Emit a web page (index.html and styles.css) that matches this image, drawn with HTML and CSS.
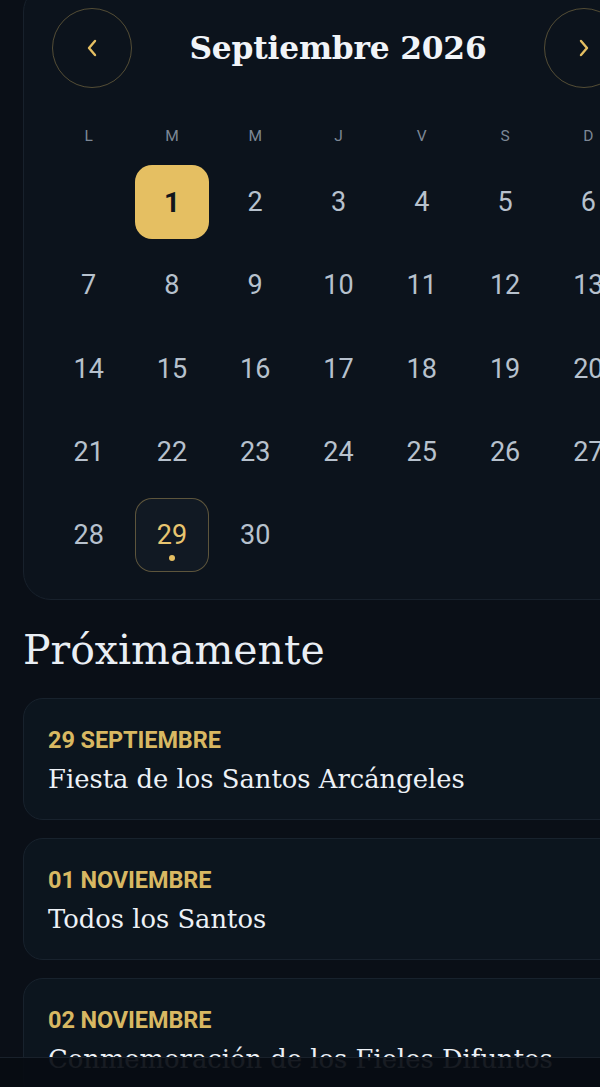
FILE: index.html
```html
<!DOCTYPE html>
<html lang="es">
<head>
<meta charset="utf-8">
<title>Calendario</title>
<link rel="stylesheet" href="styles.css">
</head>
<body>
<div class="page">
  <section class="calendar">
    <header class="cal-head">
      <button class="nav-btn" aria-label="Mes anterior">
        <svg width="16" height="20" viewBox="0 0 16 20"><path d="M11 3 L5 10 L11 17" fill="none" stroke="#e5bf62" stroke-width="2.4" stroke-linecap="round" stroke-linejoin="round"/></svg>
      </button>
      <h1 class="month">Septiembre 2026</h1>
      <button class="nav-btn" aria-label="Mes siguiente">
        <svg width="16" height="20" viewBox="0 0 16 20"><path d="M5 3 L11 10 L5 17" fill="none" stroke="#e5bf62" stroke-width="2.4" stroke-linecap="round" stroke-linejoin="round"/></svg>
      </button>
    </header>
    <div class="weekdays">
      <span>L</span><span>M</span><span>M</span><span>J</span><span>V</span><span>S</span><span>D</span>
    </div>
    <div class="days">
      <span class="day empty"></span>
      <span class="day"><span class="cell today">1</span></span>
      <span class="day"><span class="cell">2</span></span>
      <span class="day"><span class="cell">3</span></span>
      <span class="day"><span class="cell">4</span></span>
      <span class="day"><span class="cell">5</span></span>
      <span class="day"><span class="cell">6</span></span>
      <span class="day"><span class="cell">7</span></span>
      <span class="day"><span class="cell">8</span></span>
      <span class="day"><span class="cell">9</span></span>
      <span class="day"><span class="cell">10</span></span>
      <span class="day"><span class="cell">11</span></span>
      <span class="day"><span class="cell">12</span></span>
      <span class="day"><span class="cell">13</span></span>
      <span class="day"><span class="cell">14</span></span>
      <span class="day"><span class="cell">15</span></span>
      <span class="day"><span class="cell">16</span></span>
      <span class="day"><span class="cell">17</span></span>
      <span class="day"><span class="cell">18</span></span>
      <span class="day"><span class="cell">19</span></span>
      <span class="day"><span class="cell">20</span></span>
      <span class="day"><span class="cell">21</span></span>
      <span class="day"><span class="cell">22</span></span>
      <span class="day"><span class="cell">23</span></span>
      <span class="day"><span class="cell">24</span></span>
      <span class="day"><span class="cell">25</span></span>
      <span class="day"><span class="cell">26</span></span>
      <span class="day"><span class="cell">27</span></span>
      <span class="day"><span class="cell">28</span></span>
      <span class="day"><span class="cell event">29<i class="dot"></i></span></span>
      <span class="day"><span class="cell">30</span></span>
    </div>
  </section>

  <h2 class="section-title">Próximamente</h2>

  <ul class="events">
    <li class="event-card">
      <div class="event-date">29 SEPTIEMBRE</div>
      <div class="event-name">Fiesta de los Santos Arcángeles</div>
    </li>
    <li class="event-card">
      <div class="event-date">01 NOVIEMBRE</div>
      <div class="event-name">Todos los Santos</div>
    </li>
    <li class="event-card">
      <div class="event-date">02 NOVIEMBRE</div>
      <div class="event-name">Conmemoración de los Fieles Difuntos</div>
    </li>
  </ul>
</div>
<nav class="bottom-bar"></nav>
</body>
</html>
```

FILE: styles.css
```css
* { box-sizing: border-box; }

html, body {
  margin: 0;
  padding: 0;
  background: #0a0f17;
  overflow: hidden;
  height: 1087px;
}

body {
  font-family: Roboto, "Noto Sans", sans-serif;
  color: #e8eef5;
}

.page {
  width: 677px;
  padding: 0 23px;
}

.calendar {
  margin-top: -16px;
  width: 631px;
  background: #0c131c;
  border: 1px solid #18212c;
  border-radius: 28px;
  padding: 23px 23px 22px;
}

.cal-head {
  display: flex;
  align-items: center;
  justify-content: space-between;
  padding: 0 6px 0 5px;
  height: 80px;
}

.nav-btn {
  width: 80px;
  height: 80px;
  border-radius: 50%;
  background: transparent;
  border: 1.5px solid rgba(200, 170, 95, 0.38);
  display: flex;
  align-items: center;
  justify-content: center;
  padding: 0;
}

.month {
  margin: 0;
  font-family: "DejaVu Serif", "Liberation Serif", serif;
  font-weight: 700;
  font-size: 31.3px;
  color: #f1f4f8;
  letter-spacing: -0.2px;
}

.weekdays {
  display: grid;
  grid-template-columns: repeat(7, 1fr);
  margin-top: 28px;
  height: 40px;
  align-items: center;
  text-align: center;
  font-size: 15.5px;
  color: #7c8795;
}

.days {
  display: grid;
  grid-template-columns: repeat(7, 1fr);
  grid-auto-rows: 83.33px;
  margin-top: 4px;
}

.day {
  display: flex;
  align-items: center;
  justify-content: center;
}

.cell {
  position: relative;
  width: 74px;
  height: 74px;
  display: flex;
  align-items: center;
  justify-content: center;
  font-size: 27px;
  color: #b7c1cd;
  border-radius: 17px;
  padding-top: 1px;
}

.cell.today {
  background: #e5bf62;
  color: #12161c;
  font-weight: 700;
  font-size: 28px;
}

.cell.event {
  background: #111923;
  border: 1.5px solid rgba(200, 170, 95, 0.42);
  color: #e8c570;
}

.dot {
  position: absolute;
  left: 50%;
  bottom: 10px;
  width: 6px;
  height: 6px;
  margin-left: -3px;
  border-radius: 50%;
  background: #e5bf62;
}

.section-title {
  margin: 22px 0 20px;
  font-family: "DejaVu Serif", "Liberation Serif", serif;
  font-weight: 400;
  font-size: 41px;
  line-height: 56px;
  color: #e9eef4;
}

.events {
  list-style: none;
  margin: 0;
  padding: 0;
  display: flex;
  flex-direction: column;
  gap: 18px;
}

.event-card {
  width: 631px;
  height: 122px;
  background: #0c151e;
  border: 1px solid #18222d;
  border-radius: 20px;
  padding: 28px 24px 20px;
}

.event-date {
  font-family: Roboto, sans-serif;
  font-weight: 700;
  font-size: 23.5px;
  line-height: 26px;
  letter-spacing: -0.1px;
  color: #d8b862;
}

.event-name {
  margin-top: 6px;
  font-family: "DejaVu Serif", "Liberation Serif", serif;
  font-size: 25.8px;
  line-height: 40px;
  color: #edf1f6;
  white-space: nowrap;
}

.bottom-bar {
  position: fixed;
  left: 0;
  right: 0;
  top: 1057px;
  height: 30px;
  background: rgba(8, 12, 18, 0.93);
  border-top: 1px solid #19212b;
}
```
